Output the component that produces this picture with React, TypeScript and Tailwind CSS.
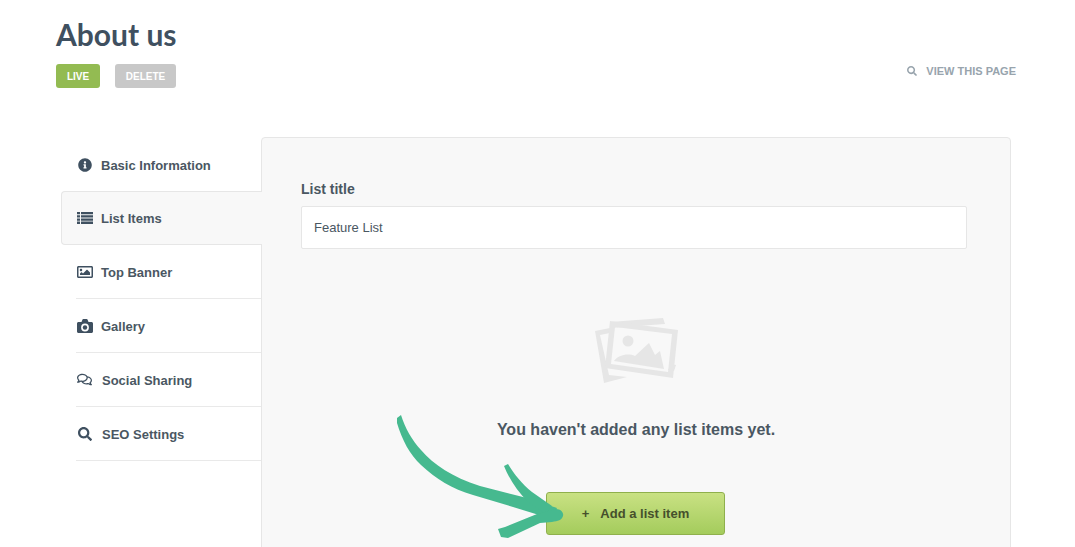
import type { ComponentType } from "react";
import { FaInfoCircle, FaRegComments, FaRegImage, FaSearch } from "react-icons/fa";

function ListIcon({ className }: { className?: string }) {
    return (
        <svg viewBox="0 0 16 12" className={className} fill="currentColor">
            <path d="M0 0h3v2.3H0zM4 0h12v2.3H4zM0 3.2h3v2.3H0zM4 3.2h12v2.3H4zM0 6.4h3v2.3H0zM4 6.4h12v2.3H4zM0 9.6h3V12H0zM4 9.6h12V12H4z" />
        </svg>
    );
}

function CameraIcon({ className }: { className?: string }) {
    return (
        <svg viewBox="0 0 16 14" className={className} fill="currentColor">
            <path
                fillRule="evenodd"
                d="M1.5 3H4.5L5.5 .6C5.6 .3 5.9 0 6.3 0H9.7C10.1 0 10.4 .3 10.5 .6L11.5 3H14.5C15.3 3 16 3.7 16 4.5V12.5C16 13.3 15.3 14 14.5 14H1.5C.7 14 0 13.3 0 12.5V4.5C0 3.7 .7 3 1.5 3ZM8 4.6A3.9 3.9 0 1 0 8 12.4A3.9 3.9 0 1 0 8 4.6Z"
            />
            <circle cx="8" cy="8.5" r="2.2" />
        </svg>
    );
}

type Tab = {
    label: string;
    icon: ComponentType<{ className?: string }>;
    size: string;
    box: string;
    line?: boolean;
    active?: boolean;
};

const tabs: Tab[] = [
    { label: "Basic Information", icon: FaInfoCircle, size: "w-[14px] h-[14px]", box: "pl-[2px] w-[25px]" },
    { label: "List Items", icon: ListIcon, size: "w-[16px] h-[12px]", box: "w-[24px]", active: true },
    { label: "Top Banner", icon: FaRegImage, size: "w-[16px] h-[16px]", box: "pl-[1px] w-[25px]", line: true },
    { label: "Gallery", icon: CameraIcon, size: "w-[16px] h-[14px]", box: "pl-[1px] w-[25px]", line: true },
    { label: "Social Sharing", icon: FaRegComments, size: "w-[15px] h-[15px]", box: "pl-[1px] w-[26px]", line: true },
    { label: "SEO Settings", icon: FaSearch, size: "w-[14px] h-[14px]", box: "pl-[2px] w-[26px]", line: true },
];

function EmptyIcon() {
    return (
        <svg viewBox="0 0 110 90" className="w-[110px] h-[90px]" fill="#e6e6e6">
            <path d="M15 25 L30 22 L30 27 L20 29 L29 69 L47 71 L24 77 Z" />
            <path d="M30 16 L83 12 L85 18 L30 22 Z" />
            <path d="M92 58 L96 59 L94 65 L88 64 Z" />
            <path
                fillRule="evenodd"
                d="M30 15 L98 24 L93 72 L25 62 Z M35 21 L92 28 L88 66 L31 58 Z"
            />
            <circle cx="48" cy="35" r="5.5" />
            <path d="M34 55 C38 49 48 47 55 50 L69 37 L75 49 L80 45 L84 63 Z" />
        </svg>
    );
}

function Arrow() {
    return (
        <svg className="absolute left-0 top-0 w-[1075px] h-[547px] pointer-events-none" viewBox="0 0 1075 547" fill="#46b98f">
            {/* shaft */}
            <path d="M397 418 L401 415 C405 428 412 440 421 450 C434 465 452 477 480 486 L527 498 L557 508 L552 519 L513 507 L473 495 C452 489 436 479 421 465 C410 455 402 440 397 423 Z" />
            {/* upper barb */}
            <path d="M504 466 L508 464 C514 474 522 484 532 492 L552 506 L546 514 L528 502 C518 492 509 479 504 466 Z" />
            {/* lower barb */}
            <path d="M498 529 L505 527 L537 514 L556 509 C561 509 564 513 563 516 C562 520 558 521 552 522 L540 523 L508 538 L501 537 Z" />
        </svg>
    );
}

export default function App() {
    return (
        <div className="relative h-[547px] overflow-hidden bg-white font-['Liberation_Sans',Arial,sans-serif] text-[#4a5762]">
            <div className="flex justify-between pl-[56px] pr-[59px] pt-[16px]">
                <div>
                    <h1 className="font-['Lato',sans-serif] text-[30px] leading-[37px] font-bold text-[#3f5060]">About us</h1>
                    <div className="mt-[11px] flex gap-[15px]">
                        <span className="flex h-[24px] w-[44px] items-center justify-center rounded-[3px] bg-[#93bb52] text-[10px] font-bold text-white">LIVE</span>
                        <span className="flex h-[24px] w-[61px] items-center justify-center rounded-[3px] bg-[#c8c8c8] text-[10px] font-bold text-white">DELETE</span>
                    </div>
                </div>
                <div className="mt-[48px] flex h-[14px] items-center gap-[9px] text-[11px] font-bold text-[#98a4ad]">
                    <FaSearch className="h-[10px] w-[10px]" />
                    <span>VIEW THIS PAGE</span>
                </div>
            </div>

            <div className="ml-[61px] mt-[49px] flex w-[950px]">
                <div className="w-[201px] shrink-0 pt-px">
                    {tabs.map((tab) => {
                        const Icon = tab.icon;
                        return (
                            <div
                                key={tab.label}
                                className={
                                    tab.active
                                        ? "relative z-10 flex h-[54px] items-center rounded-l-[4px] border border-r-0 border-[#e6e6e6] bg-[#f8f8f8] pl-[15px]"
                                        : tab.line
                                          ? "ml-[15px] flex h-[54px] items-center border-b border-[#e9e9e9]"
                                          : "ml-[15px] flex h-[53px] items-center"
                                }
                            >
                                <span className={`flex shrink-0 items-center ${tab.box}`}>
                                    <Icon className={`${tab.size} text-[#3f5060]`} />
                                </span>
                                <span className="pt-[2px] text-[13px] font-bold">{tab.label}</span>
                            </div>
                        );
                    })}
                </div>

                <div className="-ml-px h-[500px] w-[750px] rounded-t-[4px] border border-[#e6e6e6] bg-[#f8f8f8] pl-[39px] pr-[43px] pt-[43px]">
                    <label className="block text-[14px] leading-[17px] font-bold">List title</label>
                    <div className="mt-[8px] flex h-[43px] items-center rounded-[2px] border border-[#e6e6e6] bg-white pl-[12px] text-[13px]">
                        Feature List
                    </div>
                    <div className="flex flex-col items-center">
                        <div className="mt-[57px] ml-[1px]">
                            <EmptyIcon />
                        </div>
                        <p className="mt-[24px] ml-[4px] text-[16px] leading-[19px] font-bold">You haven't added any list items yet.</p>
                        <button className="mt-[53px] ml-[3px] flex h-[43px] w-[179px] items-center justify-center gap-[11px] rounded-[3px] border border-[#8fb04c] bg-gradient-to-b from-[#c9e183] to-[#a4cc5c] text-[13px] font-bold text-[#46502c]">
                            <span>+</span>
                            <span>Add a list item</span>
                        </button>
                    </div>
                </div>
            </div>

            <Arrow />
        </div>
    );
}
